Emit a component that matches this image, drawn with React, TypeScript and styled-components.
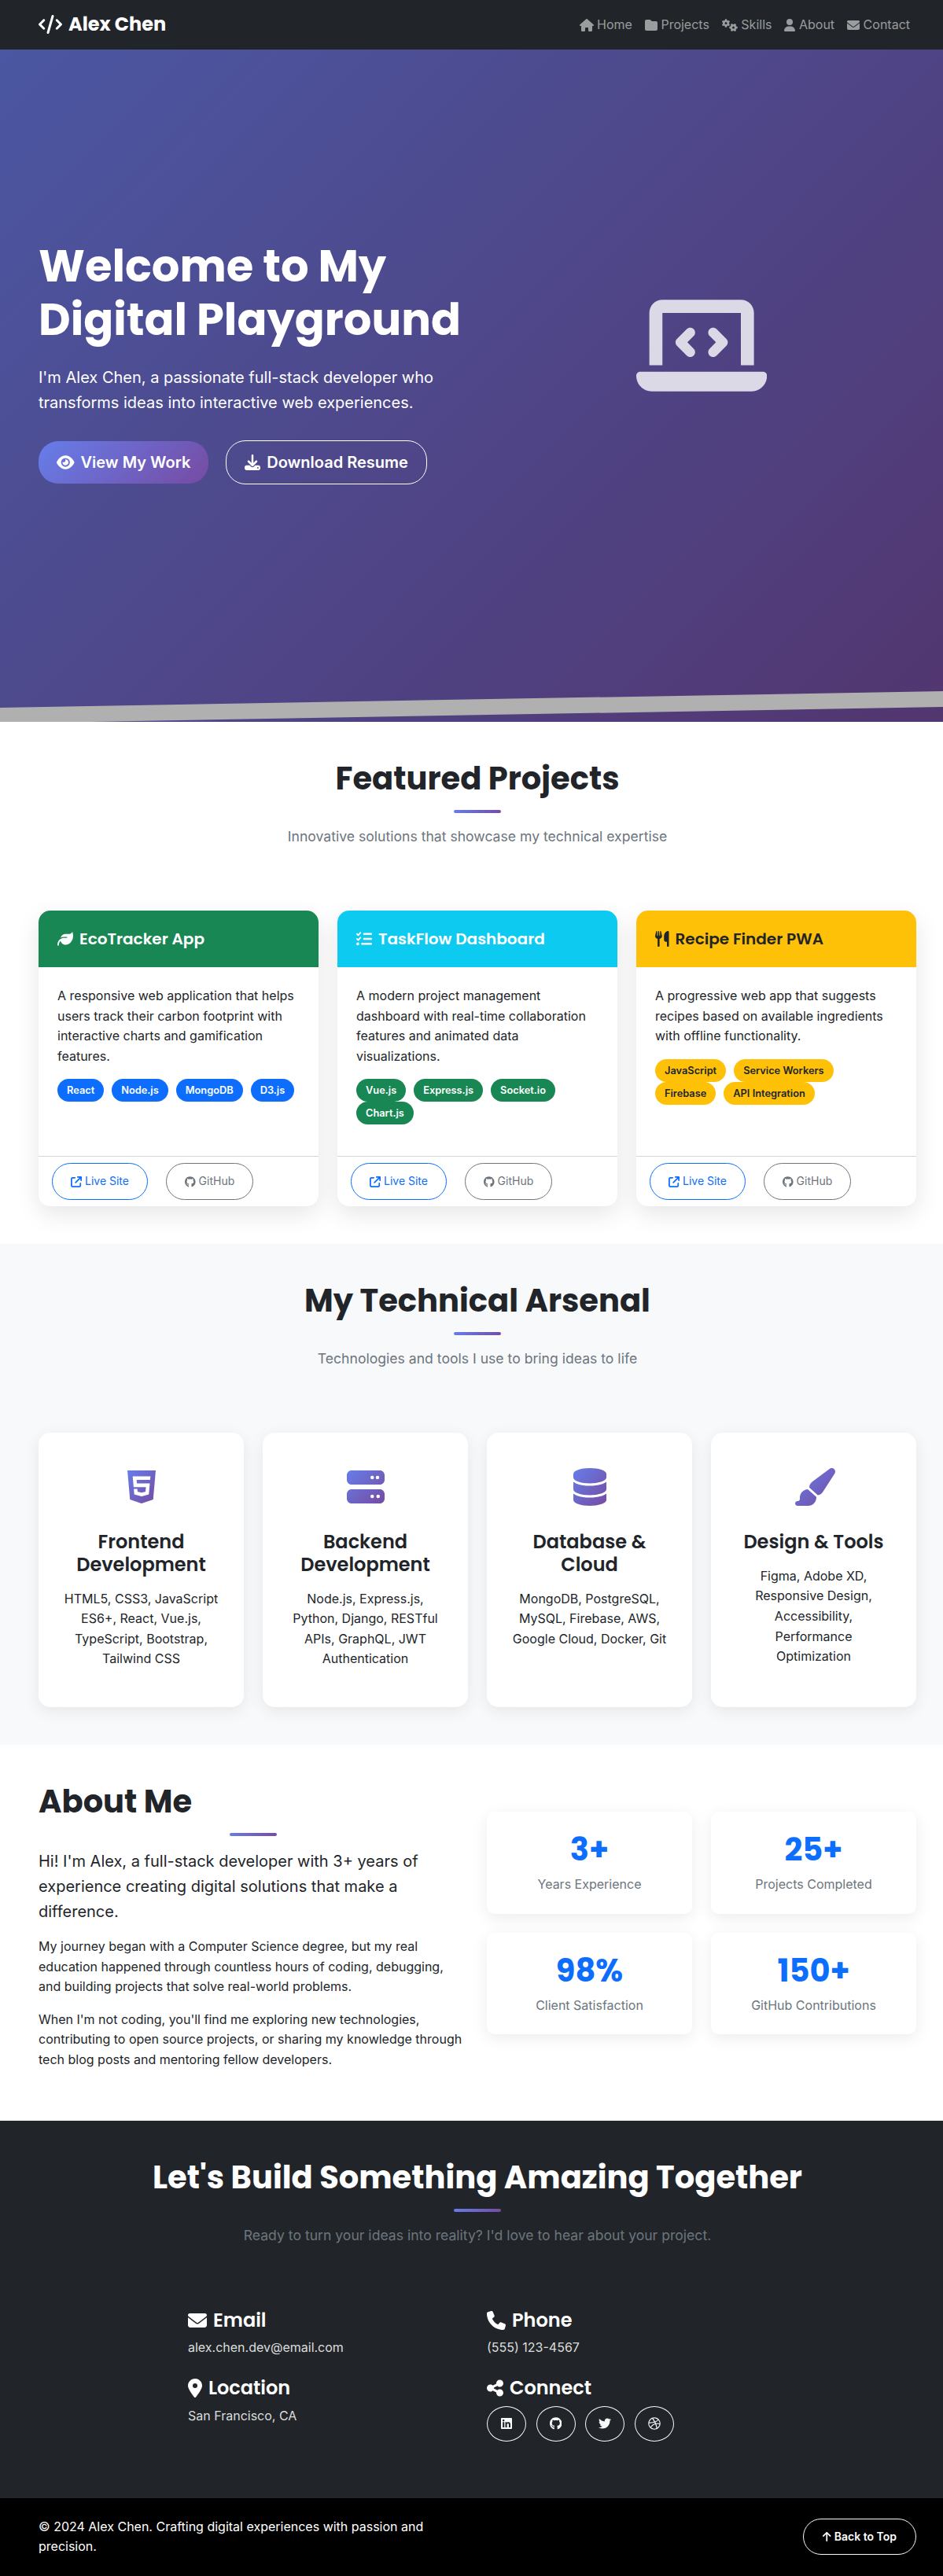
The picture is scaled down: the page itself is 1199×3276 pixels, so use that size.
import * as React from "react";
import styled, { createGlobalStyle } from "styled-components";
import type { IconType } from "react-icons";
import {
  FaArrowUp,
  FaArrowUpRightFromSquare,
  FaCode,
  FaDatabase,
  FaDownload,
  FaDribbble,
  FaEnvelope,
  FaEye,
  FaFolder,
  FaGears,
  FaGithub,
  FaHouse,
  FaHtml5,
  FaLaptopCode,
  FaLeaf,
  FaLinkedin,
  FaListCheck,
  FaLocationDot,
  FaPaintbrush,
  FaPhone,
  FaServer,
  FaShareNodes,
  FaTwitter,
  FaUser,
  FaUtensils,
} from "react-icons/fa6";

const heading = `Poppins, "Noto Sans", Inter, sans-serif`;
const accent = "linear-gradient(135deg, #667eea 0%, #764ba2 100%)";

const GlobalStyle = createGlobalStyle`
  * { box-sizing: border-box; }
  body {
    margin: 0;
    font-family: Inter, sans-serif;
    font-size: 16px;
    line-height: 1.6;
    color: #212529;
    background: #fff;
  }
  h1, h2, h3, h4, h5, p { margin: 0; }
  svg { flex: none; }
`;

// react-icons draws every glyph in a 1em square, the icon font gave them their own width
const sized = (Icon: IconType, width: number) => styled(Icon)`
  width: ${width}em;
`;

const House = sized(FaHouse, 1.125);
const Gears = sized(FaGears, 1.25);
const User = sized(FaUser, 0.875);
const Code = sized(FaCode, 1.25);
const Eye = sized(FaEye, 1.125);
const LaptopCode = sized(FaLaptopCode, 1.25);
const Utensils = sized(FaUtensils, 0.875);
const Github = sized(FaGithub, 0.97);
const Html5 = sized(FaHtml5, 0.75);
const Database = sized(FaDatabase, 0.875);
const Paintbrush = sized(FaPaintbrush, 1.125);
const LocationDot = sized(FaLocationDot, 0.75);
const ShareNodes = sized(FaShareNodes, 0.875);
const Linkedin = sized(FaLinkedin, 0.875);
const ArrowUp = sized(FaArrowUp, 0.75);

const GradientDefs = styled.svg`
  position: absolute;
  width: 0;
  height: 0;
`;

const Nav = styled.nav`
  height: 63px;
  background: #212529;
  padding: 0 42px 0 49px;
  display: flex;
  align-items: center;
  justify-content: space-between;
`;

const Brand = styled.div`
  font-family: ${heading};
  font-weight: 700;
  font-size: 24px;
  color: #fff;
  display: flex;
  align-items: center;
  gap: 8px;
`;

const NavLinks = styled.div`
  display: flex;
  gap: 16px;
`;

const NavLink = styled.a`
  color: rgba(255, 255, 255, 0.55);
  font-size: 16px;
  display: flex;
  align-items: center;
  gap: 4.5px;
`;

const Hero = styled.header`
  position: relative;
  height: 855px;
  overflow: hidden;
  background: linear-gradient(135deg, #4b57a2 0%, #523670 100%);
  padding: 0 34px 60px 49px;
  display: grid;
  grid-template-columns: 1fr 1fr;
  column-gap: 24px;
  align-items: center;
  color: #fff;
`;

const Band = styled.div`
  position: absolute;
  left: 0;
  right: 0;
  top: 816px;
  height: 42px;
  background: #b0b0b0;
  clip-path: polygon(0 21px, 100% 0, 100% 20px, 0 41px);
`;

const HeroTitle = styled.h1`
  font-family: ${heading};
  font-weight: 700;
  font-size: 56px;
  line-height: 1.2;
  margin-bottom: 24px;
`;

const HeroLead = styled.p`
  font-size: 20px;
  line-height: 32px;
  max-width: 540px;
  margin-bottom: 32px;
`;

const HeroButtons = styled.div`
  display: flex;
  align-items: center;
  gap: 22px;
`;

const HeroButton = styled.a<{ $primary?: boolean }>`
  height: ${(p) => (p.$primary ? "54px" : "56px")};
  padding: 0 23px;
  border-radius: 25px;
  display: flex;
  align-items: center;
  gap: 8px;
  font-size: 20px;
  font-weight: 600;
  color: #fff;
  background: ${(p) => (p.$primary ? accent : "transparent")};
  border: ${(p) => (p.$primary ? "0" : "1px solid #fff")};
`;

const HeroArt = styled.div`
  display: flex;
  justify-content: center;
  font-size: 133px;
  line-height: 1;
  color: rgba(255, 255, 255, 0.8);
  padding-bottom: 42px;
`;

const Section = styled.section<{ $bg?: string }>`
  background: ${(p) => p.$bg || "#fff"};
  padding: 48px 34px 48px 49px;
`;

const SectionHead = styled.div`
  text-align: center;
  margin-bottom: 80px;
`;

const SectionTitle = styled.h2<{ $light?: boolean }>`
  font-family: ${heading};
  font-weight: 700;
  font-size: 40px;
  line-height: 48px;
  color: ${(p) => (p.$light ? "#fff" : "#212529")};
`;

const Rule = styled.div`
  width: 60px;
  height: 4px;
  border-radius: 2px;
  background: ${accent};
  margin: 16px auto;
`;

const SectionSub = styled.p`
  font-size: 17.6px;
  line-height: 28px;
  color: #6c757d;
`;

const ProjectGrid = styled.div`
  display: grid;
  grid-template-columns: repeat(3, 1fr);
  gap: 24px;
`;

const ProjectCard = styled.article`
  background: #fff;
  border-radius: 15px;
  box-shadow: 0 10px 30px rgba(0, 0, 0, 0.1);
  display: flex;
  flex-direction: column;
  overflow: hidden;
  height: 376px;
`;

const ProjectHead = styled.div<{ $bg: string; $fg: string }>`
  background: ${(p) => p.$bg};
  color: ${(p) => p.$fg};
  height: 72px;
  padding: 0 24px;
  display: flex;
  align-items: center;
  gap: 8px;
  font-family: ${heading};
  font-weight: 600;
  font-size: 20px;
`;

const ProjectBody = styled.div`
  flex: 1;
  padding: 24px 24px 0;
  font-size: 16px;
  line-height: 25.6px;
`;

const Tags = styled.div`
  display: flex;
  flex-wrap: wrap;
  column-gap: 10px;
  margin-top: 16px;
`;

const Tag = styled.span<{ $bg: string; $fg: string }>`
  background: ${(p) => p.$bg};
  color: ${(p) => p.$fg};
  font-size: 12.8px;
  font-weight: 600;
  line-height: 29px;
  padding: 0 12px;
  border-radius: 15px;
`;

const ProjectFoot = styled.div`
  border-top: 1px solid #d3d4d5;
  height: 64px;
  padding: 8px 17px;
  display: flex;
  gap: 23px;
`;

const OutlineBtn = styled.a<{ $color: string }>`
  height: 47px;
  padding: 0 23px;
  border: 1px solid ${(p) => p.$color};
  color: ${(p) => p.$color};
  border-radius: 25px;
  display: flex;
  align-items: center;
  gap: 4px;
  font-size: 14px;
`;

const SkillGrid = styled.div`
  display: grid;
  grid-template-columns: repeat(4, 1fr);
  gap: 24px;
`;

const SkillCard = styled.div`
  background: #fff;
  border-radius: 15px;
  box-shadow: 0 5px 20px rgba(0, 0, 0, 0.08);
  height: 349px;
  padding: 45px 32px;
  text-align: center;
`;

const SkillIcon = styled.div`
  font-size: 48px;
  line-height: 1;
  height: 48px;
  margin-bottom: 32px;
  display: flex;
  justify-content: center;

  svg {
    fill: url(#icon-gradient);
  }
`;

const SkillTitle = styled.h4`
  font-family: ${heading};
  font-weight: 600;
  font-size: 24px;
  line-height: 28.8px;
  margin-bottom: 16px;
`;

const SkillText = styled.p`
  font-size: 16px;
  line-height: 25.6px;
`;

const AboutGrid = styled.div`
  display: grid;
  grid-template-columns: 1fr 1fr;
  gap: 24px;
  align-items: center;
`;

const AboutTitle = styled.h2`
  font-family: ${heading};
  font-weight: 700;
  font-size: 40px;
  line-height: 48px;
`;

const AboutLead = styled.p`
  font-size: 20px;
  line-height: 32px;
  margin-bottom: 16px;
`;

const AboutText = styled.p`
  font-size: 16px;
  line-height: 25.6px;
  margin-bottom: 16px;
`;

const Stats = styled.div`
  display: grid;
  grid-template-columns: 1fr 1fr;
  gap: 24px;
  padding-bottom: 24px;
`;

const Stat = styled.div`
  background: #fff;
  border-radius: 10px;
  box-shadow: 0 5px 20px rgba(0, 0, 0, 0.08);
  padding: 24px;
  text-align: center;
`;

const StatValue = styled.div`
  font-family: ${heading};
  font-weight: 700;
  font-size: 40px;
  line-height: 48px;
  color: #0d6efd;
  margin-bottom: 8px;
`;

const StatLabel = styled.div`
  font-size: 16px;
  line-height: 25.6px;
  color: #6c757d;
`;

const ContactGrid = styled.div`
  width: 736px;
  margin: 0 auto;
  display: grid;
  grid-template-columns: 1fr 1fr;
  column-gap: 24px;
`;

const ContactItem = styled.div`
  color: #fff;
  margin-bottom: 24px;
`;

const ContactHead = styled.h5`
  font-family: ${heading};
  font-weight: 600;
  font-size: 24px;
  line-height: 28.8px;
  display: flex;
  align-items: center;
  gap: 8px;
  margin-bottom: 8px;
`;

const ContactText = styled.p`
  font-size: 16px;
  line-height: 25.6px;
  color: #dcdddd;
`;

const Socials = styled.div`
  display: flex;
  gap: 12.5px;
`;

const Social = styled.a`
  width: 50px;
  height: 45px;
  border: 1px solid #f8f9fa;
  border-radius: 50%;
  display: flex;
  align-items: center;
  justify-content: center;
  color: #f8f9fa;
  font-size: 16px;
`;

const Footer = styled.footer`
  background: #000;
  height: 99px;
  padding: 0 34px 0 49px;
  display: flex;
  align-items: center;
  justify-content: space-between;
  color: #fff;
  font-size: 16px;
  line-height: 25.6px;
`;

const FooterText = styled.p`
  width: 546px;
`;

const TopBtn = styled.a`
  height: 46px;
  padding: 0 24px;
  border: 1px solid #f8f9fa;
  border-radius: 25px;
  display: flex;
  align-items: center;
  gap: 4px;
  font-size: 14px;
  font-weight: 600;
`;

const projects = [
  {
    title: "EcoTracker App",
    icon: <FaLeaf />,
    bg: "#198754",
    fg: "#fff",
    text: "A responsive web application that helps users track their carbon footprint with interactive charts and gamification features.",
    tags: ["React", "Node.js", "MongoDB", "D3.js"],
    tagBg: "#0d6efd",
    tagFg: "#fff",
  },
  {
    title: "TaskFlow Dashboard",
    icon: <FaListCheck />,
    bg: "#0dcaf0",
    fg: "#fff",
    text: "A modern project management dashboard with real-time collaboration features and animated data visualizations.",
    tags: ["Vue.js", "Express.js", "Socket.io", "Chart.js"],
    tagBg: "#198754",
    tagFg: "#fff",
  },
  {
    title: "Recipe Finder PWA",
    icon: <Utensils />,
    bg: "#ffc107",
    fg: "#212529",
    text: "A progressive web app that suggests recipes based on available ingredients with offline functionality.",
    tags: ["JavaScript", "Service Workers", "Firebase", "API Integration"],
    tagBg: "#ffc107",
    tagFg: "#212529",
  },
];

const skills = [
  {
    title: "Frontend Development",
    icon: <Html5 />,
    text: "HTML5, CSS3, JavaScript ES6+, React, Vue.js, TypeScript, Bootstrap, Tailwind CSS",
  },
  {
    title: "Backend Development",
    icon: <FaServer />,
    text: "Node.js, Express.js, Python, Django, RESTful APIs, GraphQL, JWT Authentication",
  },
  {
    title: "Database & Cloud",
    icon: <Database />,
    text: "MongoDB, PostgreSQL, MySQL, Firebase, AWS, Google Cloud, Docker, Git",
  },
  {
    title: "Design & Tools",
    icon: <Paintbrush />,
    text: "Figma, Adobe XD, Responsive Design, Accessibility, Performance Optimization",
  },
];

const stats = [
  ["3+", "Years Experience"],
  ["25+", "Projects Completed"],
  ["98%", "Client Satisfaction"],
  ["150+", "GitHub Contributions"],
];

export default function App() {
  return (
    <>
      <GlobalStyle />
      <GradientDefs aria-hidden="true">
        <defs>
          <linearGradient id="icon-gradient" x1="0" y1="0" x2="1" y2="1">
            <stop offset="0%" stopColor="#667eea" />
            <stop offset="100%" stopColor="#764ba2" />
          </linearGradient>
        </defs>
      </GradientDefs>
      <Nav>
        <Brand>
          <Code /> Alex Chen
        </Brand>
        <NavLinks>
          <NavLink><House /> Home</NavLink>
          <NavLink><FaFolder /> Projects</NavLink>
          <NavLink><Gears /> Skills</NavLink>
          <NavLink><User /> About</NavLink>
          <NavLink><FaEnvelope /> Contact</NavLink>
        </NavLinks>
      </Nav>
      <Hero>
        <div>
          <HeroTitle>Welcome to My Digital Playground</HeroTitle>
          <HeroLead>
            I'm Alex Chen, a passionate full-stack developer who transforms ideas into interactive web experiences.
          </HeroLead>
          <HeroButtons>
            <HeroButton $primary><Eye /> View My Work</HeroButton>
            <HeroButton><FaDownload /> Download Resume</HeroButton>
          </HeroButtons>
        </div>
        <HeroArt><LaptopCode /></HeroArt>
        <Band />
      </Hero>
      <Section>
        <SectionHead>
          <SectionTitle>Featured Projects</SectionTitle>
          <Rule />
          <SectionSub>Innovative solutions that showcase my technical expertise</SectionSub>
        </SectionHead>
        <ProjectGrid>
          {projects.map((p) => (
            <ProjectCard key={p.title}>
              <ProjectHead $bg={p.bg} $fg={p.fg}>{p.icon} {p.title}</ProjectHead>
              <ProjectBody>
                {p.text}
                <Tags>
                  {p.tags.map((t) => (
                    <Tag key={t} $bg={p.tagBg} $fg={p.tagFg}>{t}</Tag>
                  ))}
                </Tags>
              </ProjectBody>
              <ProjectFoot>
                <OutlineBtn $color="#0d6efd"><FaArrowUpRightFromSquare /> Live Site</OutlineBtn>
                <OutlineBtn $color="#6c757d"><Github /> GitHub</OutlineBtn>
              </ProjectFoot>
            </ProjectCard>
          ))}
        </ProjectGrid>
      </Section>
      <Section $bg="#f8f9fa">
        <SectionHead>
          <SectionTitle>My Technical Arsenal</SectionTitle>
          <Rule />
          <SectionSub>Technologies and tools I use to bring ideas to life</SectionSub>
        </SectionHead>
        <SkillGrid>
          {skills.map((s) => (
            <SkillCard key={s.title}>
              <SkillIcon>{s.icon}</SkillIcon>
              <SkillTitle>{s.title}</SkillTitle>
              <SkillText>{s.text}</SkillText>
            </SkillCard>
          ))}
        </SkillGrid>
      </Section>
      <Section>
        <AboutGrid>
          <div>
            <AboutTitle>About Me</AboutTitle>
            <Rule />
            <AboutLead>Hi! I'm Alex, a full-stack developer with 3+ years of experience creating digital solutions that make a difference.</AboutLead>
            <AboutText>My journey began with a Computer Science degree, but my real education happened through countless hours of coding, debugging, and building projects that solve real-world problems.</AboutText>
            <AboutText>When I'm not coding, you'll find me exploring new technologies, contributing to open source projects, or sharing my knowledge through tech blog posts and mentoring fellow developers.</AboutText>
          </div>
          <Stats>
            {stats.map(([v, l]) => (
              <Stat key={l}>
                <StatValue>{v}</StatValue>
                <StatLabel>{l}</StatLabel>
              </Stat>
            ))}
          </Stats>
        </AboutGrid>
      </Section>
      <Section $bg="#212529">
        <SectionHead>
          <SectionTitle $light>Let's Build Something Amazing Together</SectionTitle>
          <Rule />
          <SectionSub>Ready to turn your ideas into reality? I'd love to hear about your project.</SectionSub>
        </SectionHead>
        <ContactGrid>
          <ContactItem>
            <ContactHead><FaEnvelope /> Email</ContactHead>
            <ContactText>alex.chen.dev@email.com</ContactText>
          </ContactItem>
          <ContactItem>
            <ContactHead><FaPhone /> Phone</ContactHead>
            <ContactText>(555) 123-4567</ContactText>
          </ContactItem>
          <ContactItem>
            <ContactHead><LocationDot /> Location</ContactHead>
            <ContactText>San Francisco, CA</ContactText>
          </ContactItem>
          <ContactItem>
            <ContactHead><ShareNodes /> Connect</ContactHead>
            <Socials>
              <Social><Linkedin /></Social>
              <Social><Github /></Social>
              <Social><FaTwitter /></Social>
              <Social><FaDribbble /></Social>
            </Socials>
          </ContactItem>
        </ContactGrid>
      </Section>
      <Footer>
        <FooterText>© 2024 Alex Chen. Crafting digital experiences with passion and precision.</FooterText>
        <TopBtn><ArrowUp /> Back to Top</TopBtn>
      </Footer>
    </>
  );
}
